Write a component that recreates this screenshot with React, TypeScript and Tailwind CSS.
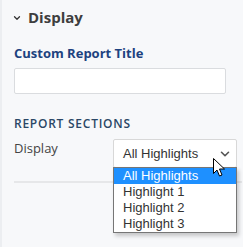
import { ChevronDown } from "lucide-react";

const options = ["All Highlights", "Highlight 1", "Highlight 2", "Highlight 3"];

function Cursor() {
  return (
    <svg width="13" height="20" viewBox="0 0 13 20" className="absolute left-[211px] top-[158px]">
      <path d="M0.5 0.5 L0.5 15.5 L4 12 L6.5 18 L9 17 L6.5 11 L11.5 11 Z" fill="#fff" stroke="#000" strokeWidth="1" strokeLinejoin="round" />
    </svg>
  );
}

export default function App() {
  return (
    <div className="relative w-[243px] h-[247px] overflow-hidden bg-[#f7f8fa] border-l-2 border-[#eceef1] font-['Open_Sans',sans-serif]">
      {/* panel header */}
      <div className="flex items-center gap-[6px] pl-[10px] pt-[5px] h-[30px]">
        <ChevronDown className="w-[10px] h-[10px] text-[#333]" strokeWidth={3} />
        <span className="text-[15px] font-bold text-[#3e3e3e]">Display</span>
      </div>

      <div className="px-[12px] pt-[14px]">
        <label className="block text-[13px] font-bold text-[#1d4280] leading-[18px]">Custom Report Title</label>
        <div className="mt-[6px] w-[212px] h-[26px] bg-white border border-[#dadcdf] rounded-[2px]" />

        <div className="mt-[22px] text-[12px] font-semibold tracking-[0.75px] text-[#2b4766] leading-[16px]">REPORT SECTIONS</div>

        <div className="mt-[7px] flex items-start">
          <span className="w-[99px] shrink-0 text-[13px] leading-[18px] text-[#444]">Display</span>
          <div className="w-[124px] shrink-0 h-[29px] bg-white border border-[#d8d8d8] rounded-[2px] flex items-center justify-between pl-[9px] pr-[4px] font-['Liberation_Sans',Arial,sans-serif] text-[13px] text-[#333]">
            <span>All Highlights</span>
            <ChevronDown className="w-[14px] h-[14px] text-[#555]" strokeWidth={2.75} />
          </div>
        </div>

        <div className="mt-[13px] h-[2px] bg-[#e6e7e9] w-[228px]" />
      </div>

      {/* open select menu */}
      <div className="absolute left-[111px] top-[167px] w-[124px] bg-white border border-[#767676] shadow-[2px_3px_4px_rgba(0,0,0,0.2)] font-['Liberation_Sans',Arial,sans-serif] text-[13px] leading-[16px]">
        {options.map((o, i) => (
          <div key={o} className={i === 0 ? "bg-[#1e90ff] text-white pl-[9px]" : "text-[#333] pl-[9px]"}>
            {o}
          </div>
        ))}
      </div>

      <Cursor />
    </div>
  );
}
